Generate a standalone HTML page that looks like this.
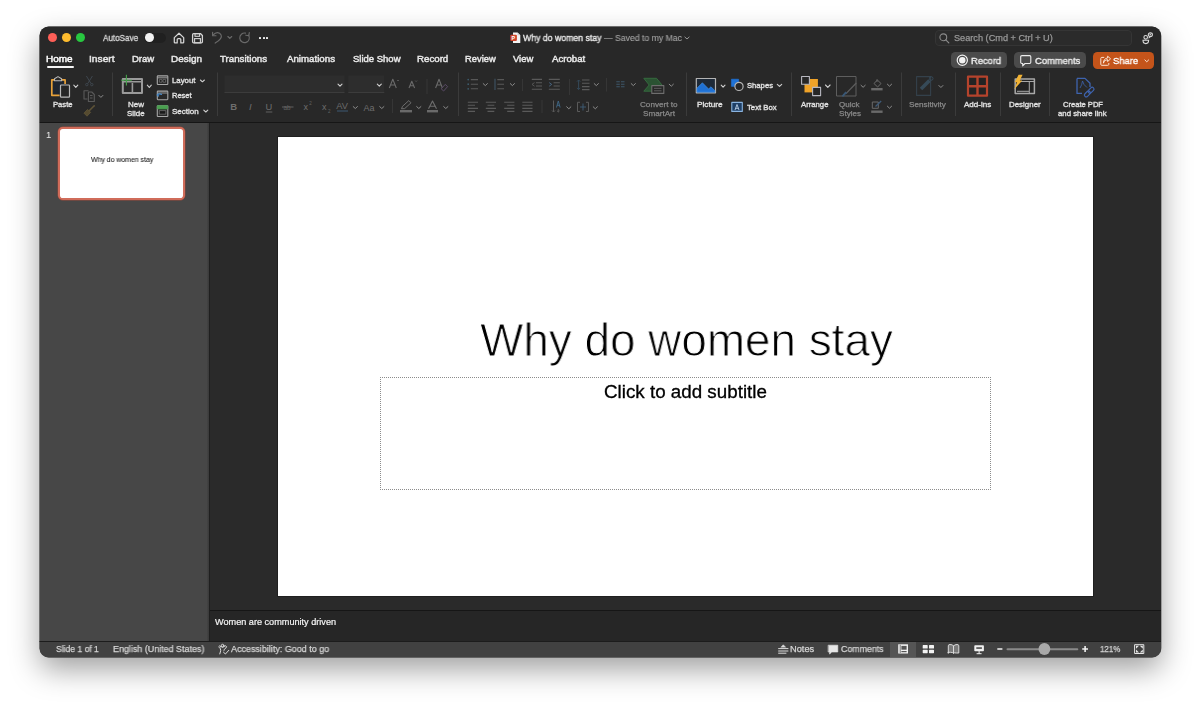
<!DOCTYPE html>
<html><head><meta charset="utf-8">
<style>
*{margin:0;padding:0;box-sizing:border-box}
html,body{width:1200px;height:709px;overflow:hidden;background:#fff;font-family:"Liberation Sans",sans-serif}
.a{position:absolute}
#shadow{position:absolute;left:39.5px;top:26.5px;width:1121.5px;height:630.9px;border-radius:9px;background:#282828;box-shadow:0 12px 30px rgba(0,0,0,0.38),0 0 0 0.5px rgba(0,0,0,0.5)}
#c{position:absolute;left:0;top:0;width:1200px;height:709px;clip-path:inset(26.5px 39px 51.6px 39.5px round 9px)}
.t{position:absolute;white-space:nowrap;line-height:1;font-family:"Liberation Sans",sans-serif;transform-origin:0 0;will-change:transform}
svg{position:absolute;overflow:visible}
</style></head><body>
<div id="shadow"></div>
<div id="c">
<!-- backgrounds -->
<div class="a" style="left:39px;top:26px;width:1122px;height:96px;background:#282828"></div>
<div class="a" style="left:39px;top:121.5px;width:1122px;height:1.5px;background:#161616"></div>
<div class="a" style="left:39px;top:122.5px;width:169.5px;height:519px;background:#474747"></div>
<div class="a" style="left:206.6px;top:122.5px;width:2px;height:519px;background:linear-gradient(90deg,#444,#3a3a3a)"></div>
<div class="a" style="left:208.5px;top:122.5px;width:1.2px;height:519px;background:#1f1f1f"></div>
<div class="a" style="left:209.5px;top:122.5px;width:952px;height:488px;background:#2a2a2a"></div>
<div class="a" style="left:276.5px;top:136px;width:817.5px;height:461px;background:#1f1f1f"></div>
<div class="a" style="left:277.5px;top:137px;width:815.5px;height:459px;background:#fff"></div>
<div class="a" style="left:209.5px;top:609.6px;width:952px;height:1.2px;background:#161616"></div>
<div class="a" style="left:209.5px;top:610.8px;width:952px;height:30.5px;background:#262626"></div>
<div class="a" style="left:39px;top:641px;width:1122px;height:1px;background:#1c1c1c"></div>
<div class="a" style="left:39px;top:642px;width:1122px;height:16px;background:#414141"></div>

<!-- traffic lights -->
<div class="a" style="left:48px;top:33.3px;width:9px;height:9px;border-radius:50%;background:#fe5f57"></div>
<div class="a" style="left:62.2px;top:33.3px;width:9px;height:9px;border-radius:50%;background:#febc2e"></div>
<div class="a" style="left:76px;top:33.3px;width:9px;height:9px;border-radius:50%;background:#28c840"></div>

<!-- autosave toggle -->
<div class="a" style="left:143.5px;top:32.5px;width:22px;height:10.5px;border-radius:6px;background:#202020"></div>
<div class="a" style="left:145px;top:33.2px;width:9.2px;height:9.2px;border-radius:50%;background:#f2f2f2"></div>

<!-- title bar icons -->
<svg style="left:173px;top:31.5px" width="12" height="12" viewBox="0 0 12 12"><path d="M1.3 5.6 L6 1.2 L10.7 5.6 V10.2 Q10.7 10.9 10 10.9 H7.8 V7.6 Q7.8 6.6 6.8 6.6 H5.2 Q4.2 6.6 4.2 7.6 V10.9 H2 Q1.3 10.9 1.3 10.2 Z" fill="none" stroke="#d4d4d4" stroke-width="1.25" stroke-linejoin="round"/></svg>
<svg style="left:192px;top:32.5px" width="12" height="10.5" viewBox="0 0 12 10.5"><path d="M1.6 0.7 H8.6 L10.4 2.5 V8.8 Q10.4 9.8 9.4 9.8 H1.6 Q0.6 9.8 0.6 8.8 V1.7 Q0.6 0.7 1.6 0.7 Z" fill="none" stroke="#d4d4d4" stroke-width="1.3"/><rect x="3" y="0.7" width="4.6" height="2.6" fill="none" stroke="#d4d4d4" stroke-width="1.1"/><rect x="2.6" y="5.6" width="5.8" height="4.2" fill="none" stroke="#d4d4d4" stroke-width="1.1"/></svg>
<svg style="left:0;top:0" width="300" height="50" viewBox="0 0 300 50"><g fill="none" stroke="#6a6a6a" stroke-width="1.15" stroke-linecap="round" stroke-linejoin="round">
<path d="M213.3 34.9 C215.5 32 219.6 31.8 221.1 34.9 C222.4 37.6 219.2 40.6 215.2 43.1"/><path d="M212.6 32.3 V35.7 H216"/>
<path d="M227.9 36.5 L229.8 38.4 L231.7 36.5"/>
<path d="M248.6 35.2 A4.8 4.8 0 1 1 245.5 33.1"/><path d="M249.3 32.6 L248.8 35.7 L245.8 35.2"/>
</g></svg>
<div class="a" style="left:258.7px;top:37px;width:2.2px;height:2.2px;background:#e6e6e6;border-radius:0.5px"></div>
<div class="a" style="left:262.5px;top:37px;width:2.2px;height:2.2px;background:#e6e6e6;border-radius:0.5px"></div>
<div class="a" style="left:266.3px;top:37px;width:2.2px;height:2.2px;background:#e6e6e6;border-radius:0.5px"></div>

<!-- doc icon -->
<svg style="left:509.5px;top:31.8px" width="11" height="11.5" viewBox="0 0 11 11.5"><path d="M3 0.5 H7.5 L10.3 3.3 V10.6 Q10.3 11.1 9.8 11.1 H3.5 Q3 11.1 3 10.6 Z" fill="#f3f3f3"/><path d="M7.5 0.5 V3.3 H10.3" fill="#cfcfcf"/><rect x="0.3" y="2.8" width="6.6" height="6.2" rx="1" fill="#d0452b"/><text x="1.6" y="7.9" font-size="5.4" font-family="Liberation Sans" font-weight="bold" fill="#fff">P</text></svg>
<svg style="left:684px;top:36.2px" width="6" height="4" viewBox="0 0 6 4"><path d="M0.6 0.8 L3 3 L5.4 0.8" fill="none" stroke="#a6a6a6" stroke-width="0.9"/></svg>

<!-- search -->
<div class="a" style="left:935px;top:30.3px;width:197px;height:15.5px;border-radius:4px;background:#2b2b2b;border:0.6px solid #353535"></div>
<svg style="left:939px;top:33px" width="11" height="11" viewBox="0 0 11 11"><circle cx="4.3" cy="4.3" r="3.4" fill="none" stroke="#8a8a8a" stroke-width="1.1"/><path d="M6.8 6.8 L9.8 9.8" stroke="#8a8a8a" stroke-width="1.2" stroke-linecap="round"/></svg>
<!-- collab icon -->
<svg style="left:1140.5px;top:31.5px" width="13" height="13" viewBox="0 0 13 13"><path d="M2 8.3 H7.6 Q7.6 11.6 4.8 11.6 Q2 11.6 2 8.3 Z" fill="none" stroke="#d8d8d8" stroke-width="1.1"/><circle cx="4.7" cy="5.3" r="1.8" fill="none" stroke="#d8d8d8" stroke-width="1.1"/><path d="M7.3 2.6 Q7.3 0.9 9.3 0.9 Q11.4 0.9 11.4 2.7 Q11.4 4.6 9.3 4.6 L8.2 5.6 L8.2 4.3 Q7.3 3.8 7.3 2.6 Z" fill="none" stroke="#d8d8d8" stroke-width="1.1"/><rect x="8.6" y="2" width="1.3" height="1.4" fill="#d8d8d8"/></svg>

<!-- record / comments / share buttons -->
<div class="a" style="left:951px;top:52.1px;width:55.8px;height:16.2px;border-radius:4.5px;background:#4b4b4b"></div>
<svg style="left:956px;top:54px" width="13" height="13" viewBox="0 0 13 13"><circle cx="6.3" cy="6.2" r="5.1" fill="none" stroke="#f2f2f2" stroke-width="1.2"/><circle cx="6.3" cy="6.2" r="3.2" fill="#f2f2f2"/></svg>
<div class="a" style="left:1013.8px;top:52.3px;width:71.8px;height:15.9px;border-radius:4.5px;background:#4b4b4b"></div>
<svg style="left:1019.5px;top:54.5px" width="12" height="12" viewBox="0 0 12 12"><path d="M1.9 0.6 H9.6 Q10.8 0.6 10.8 1.8 V7.3 Q10.8 8.5 9.6 8.5 H5 L2.7 10.8 V8.5 H1.9 Q0.7 8.5 0.7 7.3 V1.8 Q0.7 0.6 1.9 0.6 Z" fill="none" stroke="#ececec" stroke-width="1.1" stroke-linejoin="round"/></svg>
<div class="a" style="left:1092.5px;top:51.8px;width:61.2px;height:16.8px;border-radius:4.5px;background:#c4541a"></div>
<svg style="left:1099.5px;top:55.5px" width="11.5" height="10" viewBox="0 0 11.5 10"><path d="M4.2 1.4 H1.8 Q0.8 1.4 0.8 2.4 V8.4 Q0.8 9.3 1.8 9.3 H7.8 Q8.8 9.3 8.8 8.4 V7" fill="none" stroke="#fbe3d2" stroke-width="1"/><path d="M3.4 7.2 Q3.8 3.8 7.6 3.6 V5.6 L10.6 2.8 L7.6 0.2 V2 Q3.6 2.4 3.4 7.2 Z" fill="none" stroke="#fbe3d2" stroke-width="1" stroke-linejoin="round"/></svg>
<svg style="left:1143.8px;top:58.6px" width="5.5" height="4" viewBox="0 0 5.5 4"><path d="M0.6 0.7 L2.75 2.8 L4.9 0.7" fill="none" stroke="#fbe3d2" stroke-width="1"/></svg>
<!-- home underline -->
<div class="a" style="left:47px;top:66.4px;width:26.5px;height:1.8px;border-radius:1px;background:#f4f4f4"></div>
<svg style="left:0;top:0" width="1200" height="125" viewBox="0 0 1200 125">
<g fill="none" stroke-linejoin="round">
<!-- separators -->
<g stroke="#3b3b3b" stroke-width="1">
<path d="M112.5 72.5 V116"/><path d="M217.5 72.5 V116"/><path d="M458.5 72.5 V116"/><path d="M686.5 72.5 V116"/>
<path d="M791.5 72.5 V116"/><path d="M901.5 72.5 V116"/><path d="M955.5 72.5 V116"/><path d="M1000.5 72.5 V116"/><path d="M1049.5 72.5 V116"/>
<path d="M427 79 V94" stroke="#363636"/><path d="M392.5 99 V113" stroke="#363636"/>
<path d="M522.5 79 V91" stroke="#363636"/><path d="M569.5 79 V95" stroke="#363636"/><path d="M606.5 78 V91.5" stroke="#363636"/><path d="M542 100 V113" stroke="#363636"/>
</g>
<!-- Paste -->
<rect x="52.4" y="80.6" width="12.6" height="14.6" fill="#1f2630" stroke="none"/>
<path d="M54.5 79.9 H51.8 V95.3 H59.6" stroke="#e8a23a" stroke-width="1.7"/>
<path d="M61.6 79.9 H65.1 V84" stroke="#e8a23a" stroke-width="1.7"/>
<path d="M54.5 80.8 V78.8 L58 76.6 L61.6 78.8 V80.8 Z" stroke="#b8b8b8" stroke-width="1.1"/>
<rect x="60.5" y="85" width="9" height="12.2" rx="0.8" fill="#262626" stroke="#b8b8b8" stroke-width="1.2"/>
<!-- cut -->
<g stroke="#3e464e" stroke-width="1"><path d="M86.4 76 L91 83.5 M92.4 76 L87.8 83.5"/><circle cx="86.8" cy="84.6" r="1.2"/><circle cx="91.8" cy="84.6" r="1.2"/></g>
<!-- copy -->
<g stroke="#5a5a5a" stroke-width="1.1"><path d="M87.5 99 H84 V90.8 H88.5"/><path d="M88.4 92 H91.8 L94.3 94.5 V101.5 H88.4 Z"/><path d="M90 95.5 H92.5 M90 98 H92.5"/></g>
<!-- format painter -->
<path d="M84 113.2 L87.6 109.4 L90.6 112.4 L87 116.2 Z" fill="#564b30" stroke="#5e5337" stroke-width="0.9"/>
<path d="M89.2 110.8 L94.2 105.8" stroke="#5e5337" stroke-width="1.6" stroke-linecap="round"/>
<!-- New slide -->
<rect x="122.8" y="79" width="19.2" height="14" fill="none" stroke="#9a9a9a" stroke-width="2"/>
<path d="M123 81.8 H142" stroke="#9a9a9a" stroke-width="1.6"/>
<path d="M132.4 83 V92.5" stroke="#9a9a9a" stroke-width="1.6"/>
<path d="M126.4 74.8 V85.6 M121.2 80.3 H131.8" stroke="#45a24b" stroke-width="1.1"/>
<!-- layout / reset / section icons -->
<rect x="157.3" y="75.9" width="10.5" height="8.6" rx="0.6" stroke="#a8a8a8" stroke-width="1.1"/>
<path d="M157.5 77.8 H167.5" stroke="#a8a8a8" stroke-width="0.9"/>
<rect x="159.4" y="79.6" width="2.6" height="2.6" fill="#1a1a1a" stroke="#8a8a8a" stroke-width="0.6"/><rect x="163" y="79.6" width="2.6" height="2.6" fill="#1a1a1a" stroke="#8a8a8a" stroke-width="0.6"/>
<rect x="157.3" y="91.1" width="10.5" height="8.6" rx="0.6" stroke="#a8a8a8" stroke-width="1.1"/>
<path d="M157.5 93 H167.5" stroke="#a8a8a8" stroke-width="0.9"/>
<path d="M162 94.5 Q158.8 93 157 95 M157 95 L158.8 93.6 M157 95 L159 96.3" stroke="#4a8fd0" stroke-width="1.1"/>
<rect x="157.3" y="105.7" width="10.5" height="10.8" rx="0.6" stroke="#a8a8a8" stroke-width="1.1"/>
<rect x="157.3" y="105.7" width="10.5" height="3.2" fill="#4aa050" stroke="#4aa050" stroke-width="0.8"/>
<rect x="159.3" y="110.6" width="6.5" height="3.6" fill="#1a1a1a" stroke="#8a8a8a" stroke-width="0.6"/>
<!-- font name & size boxes -->
<rect x="224.5" y="75.5" width="120" height="17" fill="#2d2d2d" stroke="none"/>
<path d="M224.5 92.5 H344.5" stroke="#3c3c3c" stroke-width="1"/>
<rect x="348.3" y="75.5" width="36" height="17" fill="#2d2d2d" stroke="none"/>
<path d="M348.3 92.5 H384.3" stroke="#3c3c3c" stroke-width="1"/>
<!-- chevrons -->
<g stroke="#d0d0d0" stroke-width="1.1" stroke-linecap="round">
<path d="M73.8 85.2 L75.8 87.4 L77.8 85.2"/>
<path d="M147.3 85.2 L149.3 87.5 L151.3 85.2"/>
<path d="M200.4 80 L202.4 81.8 L204.4 80"/>
<path d="M203.8 110.2 L205.8 112 L207.8 110.2"/>
<path d="M338 84.2 L340 86.2 L342 84.2"/>
<path d="M377.3 84.2 L379.3 86.2 L381.3 84.2"/>
<path d="M721.2 85.2 L723.1 87.2 L725 85.2"/>
<path d="M777.3 84.3 L779.5 86.4 L781.7 84.3"/>
<path d="M825.5 85 L827.8 87.3 L830.1 85"/>
</g>
<g stroke="#8c8c8c" stroke-width="1" stroke-linecap="round">
<path d="M98.9 95.4 L100.9 97.4 L102.9 95.4"/>
<path d="M353.2 106.6 L355.3 108.5 L357.4 106.6"/>
<path d="M379.7 106.6 L381.8 108.5 L383.9 106.6"/>
<path d="M416.7 106.6 L418.8 108.5 L420.9 106.6"/>
<path d="M443.7 106.6 L445.8 108.5 L447.9 106.6"/>
<path d="M483.2 83.6 L485.3 85.6 L487.4 83.6"/>
<path d="M510.3 83.6 L512.4 85.6 L514.5 83.6"/>
<path d="M594.2 83.6 L596.3 85.6 L598.4 83.6"/>
<path d="M631.2 83.6 L633.3 85.6 L635.4 83.6"/>
<path d="M669.2 84.2 L671.3 86.2 L673.4 84.2"/>
<path d="M566.7 106.8 L568.8 108.8 L570.9 106.8"/>
<path d="M593.2 106.8 L595.3 108.8 L597.4 106.8"/>
<path d="M861 85.3 L863.1 87.3 L865.2 85.3"/>
<path d="M887.4 84.2 L889.5 86.2 L891.6 84.2"/>
<path d="M887.4 106.2 L889.5 108.2 L891.6 106.2"/>
<path d="M938.9 85.5 L940.9 87.5 L942.9 85.5"/>
</g>
<!-- grow / shrink font -->
<g stroke="#6a6a6a" stroke-width="1.1"><path d="M389.3 88 L392.8 79.2 L396.3 88 M390.6 85 H395"/><path d="M397 81 L398 80 L399 81" stroke-width="0.7"/>
<path d="M409 88 L411.8 81.2 L414.6 88 M410 85.8 H413.6"/><path d="M415.2 80.6 L416.1 81.5 L417 80.6" stroke-width="0.7"/>
<path d="M435.6 88 L439 79.3 L442.4 88 M436.8 85 H441.2"/></g>
<path d="M441.2 88.8 L445.2 84.4 L447.6 86.6 L443.6 91 Z" stroke="#5a4a66" stroke-width="1"/>
<!-- B I U abc x2 x2 -->
<g fill="#6e6e6e" stroke="none" font-family="Liberation Sans">
<text x="230.3" y="110.3" font-size="9.5" font-weight="bold">B</text>
<text x="249" y="110.3" font-size="9.5" font-style="italic">I</text>
<text x="265.5" y="110" font-size="9.3">U</text>
<text x="303.5" y="110.3" font-size="9">x</text>
<text x="322" y="110.3" font-size="9">x</text>
<text x="363.5" y="110.5" font-size="9">Aa</text>
</g>
<g stroke="#6e6e6e" stroke-width="0.8"><path d="M265.8 112 H272.3"/><path d="M282 107 H293.5"/></g>
<g fill="#626262" stroke="none" font-family="Liberation Sans"><text x="283.5" y="110.3" font-size="6.3">ab</text><text x="309.3" y="104.6" font-size="4.5">2</text><text x="328" y="113" font-size="4.5">2</text></g>
<!-- AV -->
<g fill="#6a6a6a" stroke="none" font-family="Liberation Sans"><text x="336.3" y="109" font-size="9.3">AV</text></g>
<path d="M337 111 H348" stroke="#3f5f7a" stroke-width="0.9"/>
<!-- highlighter & font color -->
<path d="M401.5 108.8 L402.5 106.3 L408.8 100.6 L411 102.8 L404.7 108.6 Z" stroke="#6e6e6e" stroke-width="1"/>
<rect x="400" y="110" width="12" height="2.4" fill="#6a6a6a" stroke="none"/>
<path d="M428.5 108.8 L432.5 101 L436.5 108.8 M429.8 106.2 H435.2" stroke="#6e6e6e" stroke-width="1.1"/>
<rect x="427" y="110" width="11" height="2.4" fill="#6a6a6a" stroke="none"/>
<!-- bullets / numbering -->
<g stroke="#585858" stroke-width="1.1">
<path d="M470.8 79.6 H478 M470.8 84.2 H478 M470.8 88.8 H478"/>
<path d="M497.3 79.6 H504 M497.3 84.2 H504 M497.3 88.8 H504"/>
</g>
<g fill="#3c5a6a" stroke="none"><circle cx="468.2" cy="79.6" r="0.9"/><circle cx="468.2" cy="84.2" r="0.9"/><circle cx="468.2" cy="88.8" r="0.9"/></g>
<path d="M495 78.8 V90" stroke="#3c5060" stroke-width="1.2"/>
<!-- indent -->
<g stroke="#5a5a5a" stroke-width="1.1">
<path d="M531.8 79.4 H542 M536 82.8 H542 M536 86 H542 M531.8 89.2 H542"/>
<path d="M548.8 79.4 H559.8 M553.6 82.8 H559.8 M553.6 86 H559.8 M548.8 89.2 H559.8"/>
</g>
<path d="M534.5 82.6 L532 84.4 L534.5 86.2" stroke="#5a5a5a" stroke-width="0.9"/>
<path d="M549.2 82.6 L551.7 84.4 L549.2 86.2" stroke="#4a6a8a" stroke-width="0.9"/>
<!-- line spacing -->
<g stroke="#5a5a5a" stroke-width="1.1"><path d="M582 80 H589.5 M582 83.3 H589.5 M582 86.6 H589.5 M582 89.6 H589.5"/></g>
<path d="M578.6 80 V89.5 M577 81.6 L578.6 80 L580.2 81.6 M577 87.9 L578.6 89.5 L580.2 87.9" stroke="#34495a" stroke-width="1"/>
<!-- columns -->
<g stroke="#3d5668" stroke-width="1.1"><path d="M616.3 81.8 H619.8 M616.3 84.3 H619.8 M616.3 86.8 H619.8 M621 81.8 H624.5 M621 84.3 H624.5 M621 86.8 H624.5"/></g>
<!-- SmartArt -->
<path d="M643.8 78.3 H656.5 L662 85 L656.5 91.2 H643.8 L649.2 85 Z" fill="#2a5232" stroke="#356a3e" stroke-width="1"/>
<rect x="651.8" y="85.6" width="12" height="7.8" fill="#262626" stroke="#6e6e6e" stroke-width="1.1"/>
<path d="M654 88.3 H661.5 M654 90.8 H661.5" stroke="#6e6e6e" stroke-width="0.8"/>
<!-- align icons -->
<g stroke="#5a5a5a" stroke-width="1.1">
<path d="M467.8 102.3 H478 M467.8 105.3 H475 M467.8 108.4 H478 M467.8 111.4 H475"/>
<path d="M485.8 102.3 H496 M487.5 105.3 H494.3 M485.8 108.4 H496 M487.5 111.4 H494.3"/>
<path d="M504.2 102.3 H514.4 M507.2 105.3 H514.4 M504.2 108.4 H514.4 M507.2 111.4 H514.4"/>
<path d="M522.3 102.3 H532.5 M522.3 105.3 H532.5 M522.3 108.4 H532.5 M522.3 111.4 H532.5"/>
</g>
<!-- text direction -->
<path d="M553.5 100.5 V112 M552 110.5 L553.5 112 L555 110.5" stroke="#5a5a5a" stroke-width="1"/>
<path d="M556.5 107.5 L558.3 101 L560.1 107.5 M557.1 105.3 H559.5" stroke="#3f6a8a" stroke-width="0.9"/>
<path d="M558.3 109 V112 M557 110.8 L558.3 112 L559.6 110.8" stroke="#5a5a5a" stroke-width="0.9"/>
<!-- align text -->
<path d="M580 102.3 H577.5 V111.5 H580 M586 102.3 H588.5 V111.5 H586" stroke="#5a5a5a" stroke-width="1"/>
<path d="M580 107 H586 M583 103.5 V110.5" stroke="#3f5f78" stroke-width="0.9"/>
<!-- Picture -->
<rect x="696.3" y="78.5" width="19.2" height="14.3" fill="#1e2a38" stroke="#b4b4b4" stroke-width="1.2"/>
<path d="M696.9 92.2 V88.2 L702.4 82.8 L708.6 89 L711 86.8 L715 90.8 V92.2 Z" fill="#1f72d6" stroke="#4a95e8" stroke-width="0.6"/>
<path d="M711.2 80.6 A1.6 1.6 0 1 0 713.6 83 A1.4 1.4 0 0 1 711.2 80.6 Z" fill="#e8b84a" stroke="none"/>
<!-- Shapes -->
<rect x="731.4" y="79.2" width="7.2" height="7.2" fill="#1f72d6" stroke="#1f72d6" stroke-width="0.6"/>
<circle cx="739" cy="86.4" r="4.1" fill="#262626" stroke="#b4b4b4" stroke-width="1.2"/>
<!-- Text box -->
<rect x="731.8" y="102.4" width="10.5" height="9" fill="#1e3f66" stroke="#8ab4e0" stroke-width="1.1"/>
<path d="M735 110 L737 104.5 L739 110 M735.7 108.3 H738.3" stroke="#cfe2f6" stroke-width="0.8"/>
<!-- Arrange -->
<rect x="804.5" y="79" width="13.4" height="13.4" fill="#f0a328" stroke="none"/>
<rect x="801.6" y="76.5" width="7.8" height="7.8" fill="#262626" stroke="#b8b8c0" stroke-width="1.1"/>
<rect x="812.6" y="87.4" width="8" height="8.2" fill="#262626" stroke="#b8b8c0" stroke-width="1.1"/>
<!-- Quick styles -->
<rect x="836.5" y="76.5" width="19.5" height="19.5" stroke="#5e5e5e" stroke-width="1"/>
<path d="M856.3 83 L846 93.6" stroke="#5e5e5e" stroke-width="1.3"/>
<path d="M846.5 92.8 L843 96.5 L842.4 95.5 L845.6 92 Z" fill="#3a5a7a" stroke="#3a5a7a" stroke-width="1"/>
<!-- Fill / outline -->
<path d="M874 83.5 L877.4 80 L881 83.5 L877.6 87 Z" stroke="#6a6a6a" stroke-width="1"/>
<path d="M877 79.2 V82" stroke="#6a6a6a" stroke-width="0.9"/>
<rect x="871.2" y="88" width="11.4" height="2.4" fill="#6a6a6a" stroke="none"/>
<rect x="872.3" y="102" width="6" height="6.3" stroke="#6a6a6a" stroke-width="1"/>
<path d="M875.5 106.5 L881.2 101" stroke="#3e5a78" stroke-width="1.3"/>
<rect x="871.2" y="110.5" width="11.4" height="2.4" fill="#6a6a6a" stroke="none"/>
<!-- Sensitivity -->
<rect x="916.6" y="76.6" width="14" height="18.8" stroke="#34414b" stroke-width="1.1"/>
<path d="M921 89 L929.5 80.5" stroke="#364a58" stroke-width="3.6"/>
<circle cx="931.2" cy="78.5" r="1.8" stroke="#364a58" stroke-width="1"/>
<!-- Add-ins -->
<rect x="968" y="76.7" width="19" height="19" fill="#232323" stroke="#b5432c" stroke-width="2.2"/>
<path d="M977.5 76.8 V95.6 M968.2 86.2 H986.8" stroke="#b5432c" stroke-width="2.4"/>
<!-- Designer -->
<rect x="1015.2" y="79" width="19.2" height="14.5" fill="#232323" stroke="#a8a8a8" stroke-width="1.5"/>
<path d="M1015.4 81.5 H1034.2 M1029.3 81.5 V93.3 M1017 91.3 H1029" stroke="#a8a8a8" stroke-width="1"/>
<path d="M1018.6 74.8 H1022.6 L1019.8 80.5 H1022.2 L1014.2 89.4 L1017 82.3 H1014.6 Z" fill="#f2b334" stroke="none"/>
<!-- Create PDF -->
<path d="M1077 78.4 H1085 L1090 83.2 V87 M1082 93.4 H1077 V78.4" stroke="#3e63ae" stroke-width="1.3"/>
<path d="M1080 88 Q1082 85 1082.5 81 Q1083.5 85 1087 87.5" stroke="#3e63ae" stroke-width="0.8"/>
<g transform="rotate(-45 1089.2 92.1)"><rect x="1083.2" y="90.3" width="6.8" height="3.6" rx="1.8" stroke="#3e63ae" stroke-width="1.2"/><rect x="1088.4" y="90.3" width="6.8" height="3.6" rx="1.8" stroke="#3e63ae" stroke-width="1.2"/></g>
</g>
</svg>
<!-- thumbnail -->
<div class="a" style="left:58.1px;top:126.8px;width:127.1px;height:73.4px;border-radius:4.8px;background:#fff;border:2.9px solid #d06c5a;box-shadow:0 0 0 0.4px #9a4a3c"></div>
<!-- subtitle placeholder -->
<div class="a" style="left:380px;top:377px;width:611px;height:113px;border:1px dotted #8c8c8c"></div>
<!-- status bar -->
<div class="a" style="left:890px;top:641.5px;width:26.2px;height:15px;background:#555555"></div>
<svg style="left:0;top:630px" width="1200" height="30" viewBox="0 630 1200 30">
<g fill="none" stroke-linejoin="round" stroke-linecap="round">
<!-- accessibility -->
<g stroke="#dcdcdc" stroke-width="1">
<circle cx="222.6" cy="645.6" r="1.3"/>
<path d="M218.6 646.6 Q219.5 645 221 646.6 Q222.6 648 224.2 646.6 Q225.7 645 226.6 646.6 Q226 648.6 224.3 649.3 L224 650.4"/>
<path d="M219.8 647.3 Q220.6 649 220.7 650.7 L219.8 653.9"/>
<path d="M223.5 652.2 L225.4 654 L228.8 650.3"/>
</g>
<!-- notes icon -->
<path d="M781.2 647 L783.3 644.8 L785.4 647 Z" fill="#dcdcdc" stroke="#dcdcdc" stroke-width="0.6"/>
<path d="M778.6 648.6 H788 M778.6 651 H788 M778.6 653.2 H786" stroke="#dcdcdc" stroke-width="1"/>
<!-- comments icon -->
<path d="M828.5 645.2 H837.8 V652 H831.6 L829.6 654.2 V652 H828.5 Z" fill="#e6e6e6" stroke="#e6e6e6" stroke-width="0.6"/>
<!-- normal view -->
<rect x="898.2" y="644.3" width="9.8" height="9.2" fill="#f2f2f2" stroke="none"/>
<rect x="901.4" y="645.9" width="5.2" height="3.8" fill="#555" stroke="none"/>
<rect x="901.4" y="651" width="5.2" height="1.2" fill="#555" stroke="none"/>
<path d="M900.2 645.2 V652.6" stroke="#555" stroke-width="0.8"/>
<!-- sorter -->
<g fill="#f2f2f2" stroke="none"><rect x="922.7" y="645.1" width="5" height="3.4" rx="0.6"/><rect x="929" y="645.1" width="5" height="3.4" rx="0.6"/><rect x="922.7" y="649.8" width="5" height="3.4" rx="0.6"/><rect x="929" y="649.8" width="5" height="3.4" rx="0.6"/></g>
<!-- reading -->
<path d="M948.3 653 V645.8 Q948.3 644.5 950 644.5 Q953.2 644.5 953.5 646 V653.3 Q953 652.3 950.5 652.3 H948.3 Z M953.5 646 Q953.8 644.5 957 644.5 Q958.8 644.5 958.8 645.8 V653 H956.5 Q954 652.3 953.5 653.3" fill="#7a7a7a" stroke="#e6e6e6" stroke-width="0.9"/>
<!-- slideshow -->
<rect x="974.3" y="645.2" width="9.6" height="6" rx="0.8" fill="#f0f0f0" stroke="none"/>
<rect x="976.3" y="647.3" width="5.6" height="1.5" fill="#414141" stroke="none"/>
<path d="M979.1 651.2 V653.3 M977 653.7 H981.2" stroke="#f0f0f0" stroke-width="1"/>
<!-- zoom -->
<path d="M997.3 649 H1002.4" stroke="#f0f0f0" stroke-width="1.6" stroke-linecap="butt"/>
<path d="M1007.5 649.3 H1077.3" stroke="#8a8a8a" stroke-width="2" stroke-linecap="round"/>
<circle cx="1044.4" cy="649" r="5.9" fill="#a9a9a9" stroke="none"/>
<path d="M1082.2 649 H1088 M1085.1 646.1 V651.9" stroke="#f0f0f0" stroke-width="1.6" stroke-linecap="butt"/>
<!-- fit -->
<rect x="1135" y="644.7" width="8.8" height="8.8" stroke="#e6e6e6" stroke-width="1"/>
<g fill="#e6e6e6" stroke="none"><path d="M1136 645.7 H1139 L1136 648.7 Z"/><path d="M1142.8 645.7 H1139.8 L1142.8 648.7 Z"/><path d="M1136 652.5 H1139 L1136 649.5 Z"/><path d="M1142.8 652.5 H1139.8 L1142.8 649.5 Z"/></g>
</g>
</svg>

<div class="t" style="left:103.42px;top:34.25px;font-size:9.3px;color:#d8d8d8;-webkit-text-stroke:0.32px #d8d8d8;transform:scaleX(0.8696);">AutoSave</div>
<div class="t" style="left:523.30px;top:34.05px;font-size:9.0px;color:#ececec;-webkit-text-stroke:0.32px #ececec;transform:scaleX(0.9686);">Why do women stay</div>
<div class="t" style="left:604.00px;top:34.30px;font-size:9.0px;color:#a6a6a6;-webkit-text-stroke:0.1px #a6a6a6;transform:scaleX(0.9622);">— Saved to my Mac</div>
<div class="t" style="left:953.75px;top:34.05px;font-size:9.0px;color:#989898;-webkit-text-stroke:0.25px #989898;transform:scaleX(1.0182);">Search (Cmd + Ctrl + U)</div>
<div class="t" style="left:46.46px;top:55.45px;font-size:9.3px;color:#ffffff;-webkit-text-stroke:0.45px #ffffff;transform:scaleX(1.0722);">Home</div>
<div class="t" style="left:88.68px;top:55.45px;font-size:9.3px;color:#e8e8e8;-webkit-text-stroke:0.45px #e8e8e8;transform:scaleX(1.0989);">Insert</div>
<div class="t" style="left:131.99px;top:55.45px;font-size:9.3px;color:#e8e8e8;-webkit-text-stroke:0.45px #e8e8e8;transform:scaleX(1.0233);">Draw</div>
<div class="t" style="left:171.46px;top:55.45px;font-size:9.3px;color:#e8e8e8;-webkit-text-stroke:0.45px #e8e8e8;transform:scaleX(1.0714);">Design</div>
<div class="t" style="left:220.00px;top:55.45px;font-size:9.3px;color:#e8e8e8;-webkit-text-stroke:0.45px #e8e8e8;transform:scaleX(1.0444);">Transitions</div>
<div class="t" style="left:286.51px;top:55.45px;font-size:9.3px;color:#e8e8e8;-webkit-text-stroke:0.45px #e8e8e8;transform:scaleX(1.0432);">Animations</div>
<div class="t" style="left:352.74px;top:55.45px;font-size:9.3px;color:#e8e8e8;-webkit-text-stroke:0.45px #e8e8e8;transform:scaleX(1.0215);">Slide Show</div>
<div class="t" style="left:416.98px;top:55.45px;font-size:9.3px;color:#e8e8e8;-webkit-text-stroke:0.45px #e8e8e8;transform:scaleX(1.0427);">Record</div>
<div class="t" style="left:464.50px;top:55.45px;font-size:9.3px;color:#e8e8e8;-webkit-text-stroke:0.45px #e8e8e8;transform:scaleX(1.0083);">Review</div>
<div class="t" style="left:512.75px;top:55.45px;font-size:9.3px;color:#e8e8e8;-webkit-text-stroke:0.45px #e8e8e8;transform:scaleX(1.0122);">View</div>
<div class="t" style="left:551.51px;top:55.45px;font-size:9.3px;color:#e8e8e8;-webkit-text-stroke:0.45px #e8e8e8;transform:scaleX(1.0385);">Acrobat</div>
<div class="t" style="left:971.31px;top:55.75px;font-size:9.6px;color:#f0f0f0;-webkit-text-stroke:0.35px #f0f0f0;transform:scaleX(0.9733);">Record</div>
<div class="t" style="left:1034.76px;top:55.75px;font-size:9.6px;color:#f0f0f0;-webkit-text-stroke:0.35px #f0f0f0;transform:scaleX(0.9783);">Comments</div>
<div class="t" style="left:1113.36px;top:55.95px;font-size:9.9px;color:#ffffff;-webkit-text-stroke:0.35px #ffffff;transform:scaleX(0.9577);">Share</div>
<div class="t" style="left:52.98px;top:100.95px;font-size:7.3px;color:#e2e2e2;-webkit-text-stroke:0.32px #e2e2e2;transform:scaleX(1.0500);">Paste</div>
<div class="t" style="left:128.05px;top:100.95px;font-size:7.3px;color:#e2e2e2;-webkit-text-stroke:0.32px #e2e2e2;transform:scaleX(1.0947);">New</div>
<div class="t" style="left:127.43px;top:109.55px;font-size:7.3px;color:#e2e2e2;-webkit-text-stroke:0.32px #e2e2e2;transform:scaleX(1.0794);">Slide</div>
<div class="t" style="left:172.17px;top:76.95px;font-size:7.3px;color:#e2e2e2;-webkit-text-stroke:0.32px #e2e2e2;transform:scaleX(1.0698);">Layout</div>
<div class="t" style="left:172.19px;top:92.45px;font-size:7.3px;color:#e2e2e2;-webkit-text-stroke:0.32px #e2e2e2;transform:scaleX(1.0293);">Reset</div>
<div class="t" style="left:172.43px;top:107.75px;font-size:7.3px;color:#e2e2e2;-webkit-text-stroke:0.32px #e2e2e2;transform:scaleX(1.0947);">Section</div>
<div class="t" style="left:639.72px;top:100.95px;font-size:7.3px;color:#888888;-webkit-text-stroke:0.25px #888888;transform:scaleX(1.1128);">Convert to</div>
<div class="t" style="left:642.72px;top:109.55px;font-size:7.3px;color:#888888;-webkit-text-stroke:0.25px #888888;transform:scaleX(1.1130);">SmartArt</div>
<div class="t" style="left:697.13px;top:100.95px;font-size:7.3px;color:#e2e2e2;-webkit-text-stroke:0.32px #e2e2e2;transform:scaleX(1.1318);">Picture</div>
<div class="t" style="left:746.64px;top:81.55px;font-size:7.3px;color:#e2e2e2;-webkit-text-stroke:0.32px #e2e2e2;transform:scaleX(1.0490);">Shapes</div>
<div class="t" style="left:747.00px;top:103.65px;font-size:7.3px;color:#e2e2e2;-webkit-text-stroke:0.32px #e2e2e2;transform:scaleX(1.0571);">Text Box</div>
<div class="t" style="left:801.26px;top:100.95px;font-size:7.3px;color:#e2e2e2;-webkit-text-stroke:0.32px #e2e2e2;transform:scaleX(1.0577);">Arrange</div>
<div class="t" style="left:839.23px;top:100.95px;font-size:7.3px;color:#888888;-webkit-text-stroke:0.25px #888888;transform:scaleX(1.0919);">Quick</div>
<div class="t" style="left:838.72px;top:109.55px;font-size:7.3px;color:#888888;-webkit-text-stroke:0.25px #888888;transform:scaleX(1.1077);">Styles</div>
<div class="t" style="left:909.22px;top:100.95px;font-size:7.3px;color:#888888;-webkit-text-stroke:0.25px #888888;transform:scaleX(1.1206);">Sensitivity</div>
<div class="t" style="left:964.48px;top:100.95px;font-size:7.3px;color:#e2e2e2;-webkit-text-stroke:0.32px #e2e2e2;transform:scaleX(1.1000);">Add-ins</div>
<div class="t" style="left:1009.16px;top:100.95px;font-size:7.3px;color:#e2e2e2;-webkit-text-stroke:0.32px #e2e2e2;transform:scaleX(1.0852);">Designer</div>
<div class="t" style="left:1062.74px;top:100.95px;font-size:7.3px;color:#e2e2e2;-webkit-text-stroke:0.32px #e2e2e2;transform:scaleX(1.0379);">Create PDF</div>
<div class="t" style="left:1058.43px;top:109.55px;font-size:7.3px;color:#e2e2e2;-webkit-text-stroke:0.32px #e2e2e2;transform:scaleX(1.0681);">and share link</div>
<div class="t" style="left:46.26px;top:129.50px;font-size:9.6px;color:#e6e6e6;-webkit-text-stroke:0.0px #e6e6e6;transform:scaleX(0.9882);">1</div>
<div class="t" style="left:90.70px;top:156.00px;font-size:7.3px;color:#222222;-webkit-text-stroke:0.1px #222222;transform:scaleX(0.9475);">Why do women stay</div>
<div class="t" style="left:479.51px;top:316.70px;font-size:46.3px;color:#000000;-webkit-text-stroke:0.0px #000000;transform:scaleX(0.9904);-webkit-text-stroke:1.0px #fff">Why do women stay</div>
<div class="t" style="left:603.89px;top:383.75px;font-size:17.5px;color:#000000;-webkit-text-stroke:0.3px #000000;transform:scaleX(1.0735);">Click to add subtitle</div>
<div class="t" style="left:215.30px;top:618.05px;font-size:9.1px;color:#f4f4f4;-webkit-text-stroke:0.2px #f4f4f4;transform:scaleX(1.0037);">Women are community driven</div>
<div class="t" style="left:56.07px;top:645.25px;font-size:9.2px;color:#d6d6d6;-webkit-text-stroke:0.25px #d6d6d6;transform:scaleX(0.9319);">Slide 1 of 1</div>
<div class="t" style="left:112.81px;top:645.25px;font-size:9.2px;color:#d6d6d6;-webkit-text-stroke:0.25px #d6d6d6;transform:scaleX(0.9720);">English (United States)</div>
<div class="t" style="left:231.00px;top:645.25px;font-size:9.2px;color:#d6d6d6;-webkit-text-stroke:0.25px #d6d6d6;transform:scaleX(0.9751);">Accessibility: Good to go</div>
<div class="t" style="left:790.30px;top:645.25px;font-size:9.2px;color:#d6d6d6;-webkit-text-stroke:0.25px #d6d6d6;transform:scaleX(1.0065);">Notes</div>
<div class="t" style="left:840.56px;top:645.25px;font-size:9.2px;color:#d6d6d6;-webkit-text-stroke:0.25px #d6d6d6;transform:scaleX(0.9591);">Comments</div>
<div class="t" style="left:1099.87px;top:645.25px;font-size:9.2px;color:#d6d6d6;-webkit-text-stroke:0.25px #d6d6d6;transform:scaleX(0.8659);">121%</div>
</div>
</body></html>
